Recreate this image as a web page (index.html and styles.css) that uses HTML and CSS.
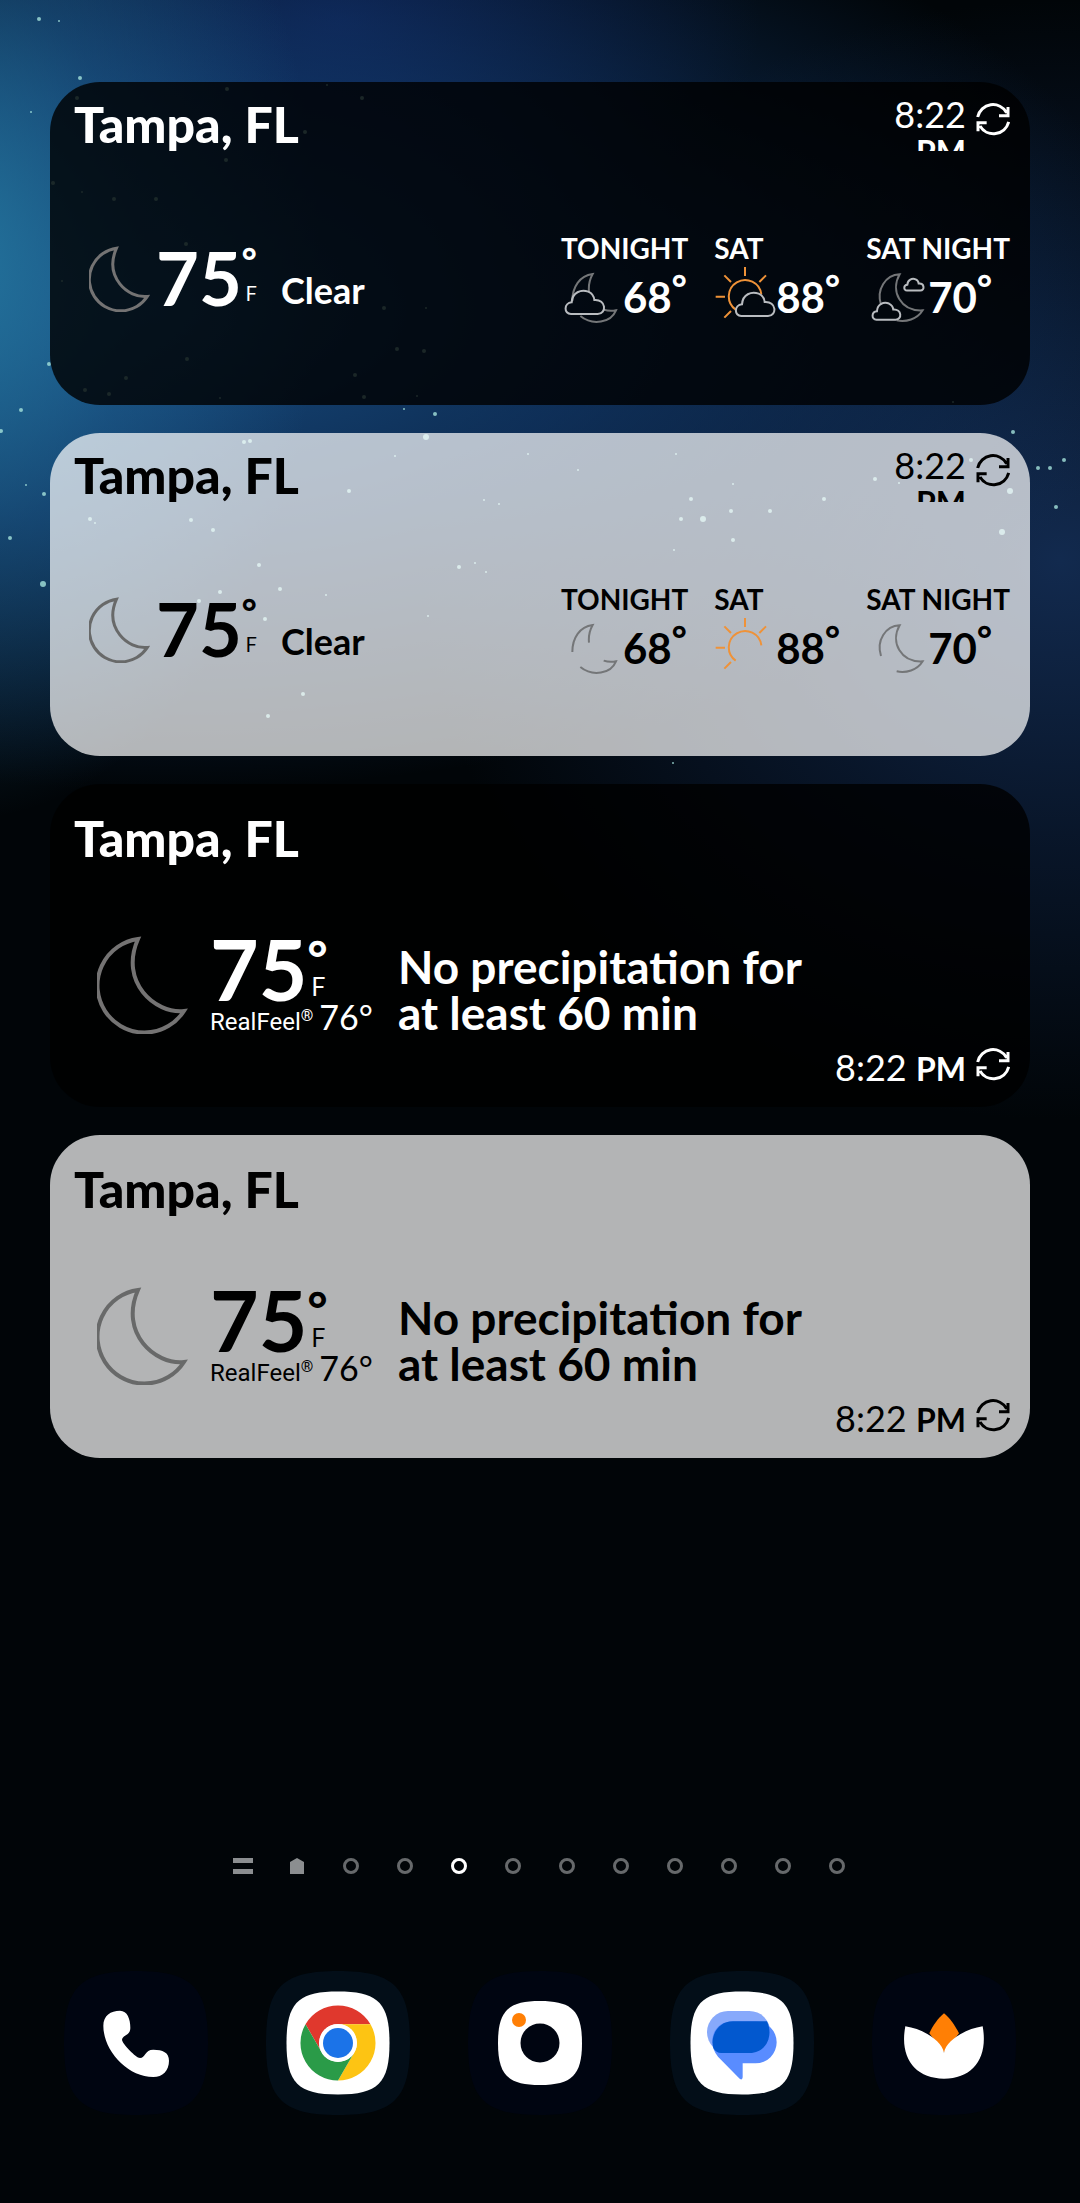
FILE: index.html
```html
<!DOCTYPE html>
<html lang="en">
<head>
    <meta charset="utf-8">
    <meta name="viewport" content="width=device-width, initial-scale=1">
    <title>Home screen</title>
    <link rel="stylesheet" href="styles.css">
</head>
<body>

    <!-- shared shapes -->
    <svg class="defs" aria-hidden="true">
        <symbol id="moon" viewBox="0 0 91 98">
            <path d="M41 3A47 47 0 1 0 87 75C58 78 22 46 41 3Z"/>
        </symbol>
        <symbol id="refresh" viewBox="1338 100 102 102">
            <path d="M1343 145A47 47 0 0 1 1430 132M1434 115V141H1407M1436 160A47 47 0 0 1 1350 172M1344 188V162H1370"/>
        </symbol>
        <symbol id="tonight-moon" viewBox="90 585 186 171">
            <path d="M124 690C124 648 146 614 185 609C176 625 172 642 174 662M148 735C185 765 240 755 255 718Q236 722 218 716"/>
        </symbol>
        <symbol id="sun" viewBox="541 585 186 171">
            <path d="M606 716A49 49 0 1 1 683 670M634 588V615M572 613L592 633M697 613L677 633M546 677H574M572 740L592 720"/>
        </symbol>
        <symbol id="satnight-moon" viewBox="996 585 186 171">
            <path d="M1041 702C1026 655 1055 612 1097 610C1068 660 1100 722 1166 718C1150 745 1115 754 1088 748"/>
        </symbol>
        <path id="cloud" d="M120 729C98 729 98 696 122 694C124 664 150 654 172 662C183 667 189 677 190 687C226 684 228 729 200 729Z"/>
        <path id="squircle" d="M72 0C128 0 144 16 144 72C144 128 128 144 72 144C16 144 0 128 0 72C0 16 16 0 72 0Z"/>
    </svg>

    <svg class="stars" id="stars" viewBox="0 0 1080 800" aria-hidden="true"></svg>

    <main class="home">
        <section class="widgets">

            <article class="card dark">
                <header class="card-head">
                    <h2>Tampa, FL</h2>
                    <div class="updated">
                        <time class="clipped">8:22 <b>PM</b></time>
                        <button class="refresh" aria-label="Refresh"><svg><use href="#refresh"/></svg></button>
                    </div>
                </header>
                <div class="card-body">
                    <div class="now">
                        <svg class="moon"><use href="#moon"/></svg>
                        <span class="temp">75</span>
                        <span class="unit"><i>°</i><small>F</small></span>
                        <span class="sky">Clear</span>
                    </div>
                    <ul class="forecast">
                        <li>
                            <h3>TONIGHT</h3>
                            <div class="day">
                                <svg viewBox="90 585 186 171"><use class="dim" href="#tonight-moon" x="90" y="585" width="186" height="171"/><use class="cloud" href="#cloud"/></svg>
                                <span>68</span><i>°</i>
                            </div>
                        </li>
                        <li>
                            <h3>SAT</h3>
                            <div class="day">
                                <svg viewBox="541 585 186 171"><use class="sun" href="#sun" x="541" y="585" width="186" height="171"/><use class="cloud" href="#cloud" transform="translate(503 6)"/></svg>
                                <span>88</span><i>°</i>
                            </div>
                        </li>
                        <li>
                            <h3>SAT NIGHT</h3>
                            <div class="day">
                                <svg viewBox="996 585 186 171"><use class="dim" href="#satnight-moon" x="996" y="585" width="186" height="171"/><use class="cloud" href="#cloud" transform="translate(941 221) scale(.72)"/><use class="cloud" href="#cloud" transform="translate(1059 294) scale(.5)"/></svg>
                                <span>70</span><i>°</i>
                            </div>
                        </li>
                    </ul>
                </div>
            </article>

            <article class="card light">
                <header class="card-head">
                    <h2>Tampa, FL</h2>
                    <div class="updated">
                        <time class="clipped">8:22 <b>PM</b></time>
                        <button class="refresh" aria-label="Refresh"><svg><use href="#refresh"/></svg></button>
                    </div>
                </header>
                <div class="card-body">
                    <div class="now">
                        <svg class="moon"><use href="#moon"/></svg>
                        <span class="temp">75</span>
                        <span class="unit"><i>°</i><small>F</small></span>
                        <span class="sky">Clear</span>
                    </div>
                    <ul class="forecast">
                        <li>
                            <h3>TONIGHT</h3>
                            <div class="day">
                                <svg><use class="dim" href="#tonight-moon"/></svg>
                                <span>68</span><i>°</i>
                            </div>
                        </li>
                        <li>
                            <h3>SAT</h3>
                            <div class="day">
                                <svg><use class="sun" href="#sun"/></svg>
                                <span>88</span><i>°</i>
                            </div>
                        </li>
                        <li>
                            <h3>SAT NIGHT</h3>
                            <div class="day">
                                <svg><use class="dim" href="#satnight-moon"/></svg>
                                <span>70</span><i>°</i>
                            </div>
                        </li>
                    </ul>
                </div>
            </article>

            <article class="card dark minute">
                <h2>Tampa, FL</h2>
                <div class="minute-body">
                    <svg class="moon"><use href="#moon"/></svg>
                    <div class="reading">
                        <div class="big">
                            <span class="temp">75</span>
                            <span class="unit"><i>°</i><small>F</small></span>
                        </div>
                        <div class="realfeel">RealFeel<sup>®</sup> <span>76°</span></div>
                    </div>
                    <p>No precipitation for<br>at least 60 min</p>
                </div>
                <footer class="updated">
                    <time>8:22 <b>PM</b></time>
                    <button class="refresh" aria-label="Refresh"><svg><use href="#refresh"/></svg></button>
                </footer>
            </article>

            <article class="card light minute">
                <h2>Tampa, FL</h2>
                <div class="minute-body">
                    <svg class="moon"><use href="#moon"/></svg>
                    <div class="reading">
                        <div class="big">
                            <span class="temp">75</span>
                            <span class="unit"><i>°</i><small>F</small></span>
                        </div>
                        <div class="realfeel">RealFeel<sup>®</sup> <span>76°</span></div>
                    </div>
                    <p>No precipitation for<br>at least 60 min</p>
                </div>
                <footer class="updated">
                    <time>8:22 <b>PM</b></time>
                    <button class="refresh" aria-label="Refresh"><svg><use href="#refresh"/></svg></button>
                </footer>
            </article>

        </section>

        <nav class="pager" aria-label="Pages">
            <button aria-label="Feed"><svg viewBox="0 0 20 20"><path d="M0 2H20V7H0ZM0 13H20V18H0Z"/></svg></button>
            <button aria-label="Home"><svg viewBox="0 0 20 20"><path d="M10 2L17 6V18H3V6Z"/></svg></button>
            <button class="dot" aria-label="Page 1"></button>
            <button class="dot" aria-label="Page 2"></button>
            <button class="dot active" aria-label="Page 3"></button>
            <button class="dot" aria-label="Page 4"></button>
            <button class="dot" aria-label="Page 5"></button>
            <button class="dot" aria-label="Page 6"></button>
            <button class="dot" aria-label="Page 7"></button>
            <button class="dot" aria-label="Page 8"></button>
            <button class="dot" aria-label="Page 9"></button>
            <button class="dot" aria-label="Page 10"></button>
        </nav>

        <nav class="dock" aria-label="Apps">
            <a href="#phone" aria-label="Phone">
                <svg viewBox="0 0 144 144">
                    <use href="#squircle" fill="#000511"/>
                    <svg viewBox="72 61 432 432"><path fill="#fff" d="M190 225C190 195 212 180 240 180C262 180 271 205 271 232C271 255 248 252 246 268C248 280 288 322 300 322C316 322 314 297 340 297C368 297 387 305 387 330C387 360 368 379 340 379C262 379 190 300 190 225Z"/></svg>
                </svg>
            </a>
            <a href="#chrome" aria-label="Chrome">
                <svg viewBox="0 0 144 144">
                    <use href="#squircle" fill="#030e18"/>
                    <path fill="#fff" d="M72 20.500C112 20.500 123.500 32 123.500 72C123.500 112 112 123.500 72 123.500C32 123.500 20.500 112 20.500 72C20.500 32 32 20.500 72 20.500Z"/>
                    <path fill="#e0382d" d="M39.500 53.250A37.500 37.500 0 0 1 104.500 53.250H72A18.750 18.750 0 0 0 55.800 81.400Z"/>
                    <path fill="#fdc413" d="M104.500 53.250A37.500 37.500 0 0 1 72 109.500L88.200 81.400A18.750 18.750 0 0 0 72 53.250Z"/>
                    <path fill="#2a9b48" d="M72 109.500A37.500 37.500 0 0 1 39.500 53.250L55.800 81.400A18.750 18.750 0 0 0 88.200 81.400Z"/>
                    <circle cx="72" cy="72" r="19" fill="#fff"/>
                    <circle cx="72" cy="72" r="15" fill="#1b73e8"/>
                </svg>
            </a>
            <a href="#camera" aria-label="Camera">
                <svg viewBox="0 0 144 144">
                    <use href="#squircle" fill="#000511"/>
                    <path fill="#fff" d="M72 30C104 30 114 40 114 72C114 104 104 114 72 114C40 114 30 104 30 72C30 40 40 30 72 30Z"/>
                    <circle cx="72" cy="72" r="19.500" fill="#000511"/>
                    <circle cx="51" cy="49" r="7" fill="#ff7f05"/>
                </svg>
            </a>
            <a href="#messages" aria-label="Messages">
                <svg viewBox="0 0 144 144">
                    <use href="#squircle" fill="#030e18"/>
                    <path fill="#fff" d="M72 20.500C112 20.500 123.500 32 123.500 72C123.500 112 112 123.500 72 123.500C32 123.500 20.500 112 20.500 72C20.500 32 32 20.500 72 20.500Z"/>
                    <svg viewBox="391 61 432 432">
                        <rect x="502" y="181" width="190" height="127" rx="63" fill="#87a9fb"/>
                        <path fill="#598cff" d="M580 212H648A63 63 0 0 1 648 338H609V380Q608 390 600 384L535 318C500 275 520 212 580 212Z"/>
                        <path fill="#0258cf" d="M580 212H682C702 255 680 307 630 307H545C534 307 527 302 521 292C511 255 535 212 580 212Z"/>
                    </svg>
                </svg>
            </a>
            <a href="#gallery" aria-label="Gallery">
                <svg viewBox="0 0 144 144">
                    <use href="#squircle" fill="#000511"/>
                    <svg viewBox="996 61 432 432">
                        <path fill="#ff7f05" d="M1212 188C1228 200 1245 225 1257 248L1212 306L1168 248C1178 225 1195 202 1212 188Z"/>
                        <path fill="#fff" d="M1096 227C1150 235 1205 270 1212 306C1218 270 1275 235 1328 227C1345 320 1300 384 1212 384C1124 384 1078 320 1096 227Z"/>
                    </svg>
                </svg>
            </a>
        </nav>
    </main>

    <script type="text/javascript">
        // x, y, radius
        const stars = [
            [39,19,2],[59,21,1],[80,78,2],[31,112,1],[227,89,2],[327,85,1],[362,98,2],[305,132,2],[77,98,2],
            [226,160,2],[53,183,2],[82,192,1],[114,199,2],[156,199,2],[186,244,2],[49,364,2],[126,378,2],
            [109,394,2],[85,390,2],[220,398,1],[187,359,2],[355,375,2],[364,397,2],[417,396,1],[397,349,2],
            [424,351,2],[384,308,2],[426,308,1],[62,281,1],[21,410,2],[404,409,1],[435,414,2],[426,437,3],
            [244,442,2],[250,441,2],[395,456,1],[349,491,2],[528,454,1],[578,470,1],[484,500,1],[499,504,1],
            [90,519,2],[95,523,1],[191,520,2],[213,530,2],[44,494,2],[26,485,1],[10,538,2],[43,584,3],
            [259,565,2],[459,567,2],[475,563,1],[486,572,1],[428,616,1],[280,589,2],[220,592,2],[199,601,2],
            [326,595,1],[265,619,2],[303,694,2],[268,716,2],[953,402,1],[1013,432,2],[1064,460,2],[1050,468,2],
            [1038,468,2],[1056,507,2],[1002,532,3],[1010,491,3],[875,479,2],[824,499,2],[770,511,2],[733,484,1],
            [691,499,2],[731,511,2],[681,519,2],[703,519,3],[733,540,2],[674,550,1],[899,483,1],[971,460,2],
            [676,454,1],[673,763,1],[1,431,2]
        ];
        const sky = document.getElementById('stars');
        stars.forEach(([x, y, r]) => {
            const star = document.createElementNS('http://www.w3.org/2000/svg', 'circle');
            star.setAttribute('cx', x);
            star.setAttribute('cy', y);
            star.setAttribute('r', r);
            sky.appendChild(star);
        });
    </script>

</body>
</html>
```
FILE: styles.css
```css
*,
*::before {
    margin: 0;
    padding: 0;
    box-sizing: border-box;
}

body {
    position: relative;
    color: #fff;
    font-family: Lato, "Liberation Sans", sans-serif;
    background:
        radial-gradient(ellipse 360px 560px at -40px 260px, rgba(38, 125, 165, 0.85), rgba(34, 110, 160, 0.4) 50%, rgba(30, 100, 160, 0) 100%),
        radial-gradient(ellipse 1000px 480px at 160px 310px, rgba(26, 84, 140, 0.9), rgba(20, 66, 124, 0.65) 45%, rgba(14, 40, 90, 0) 100%),
        radial-gradient(ellipse 420px 260px at 340px 20px, rgba(16, 34, 100, 0.6), rgba(10, 20, 70, 0) 100%),
        radial-gradient(ellipse 640px 560px at 1060px 560px, rgba(20, 46, 86, 0.9), rgba(16, 38, 74, 0.5) 50%, rgba(10, 30, 60, 0) 100%),
        #010508;
    background-repeat: no-repeat;
}

button {
    border: none;
    background: none;
    color: inherit;
    cursor: pointer;
}

svg {
    display: block;
    flex: none;
}

i {
    font-style: normal;
}

.defs {
    position: absolute;
    width: 0;
    height: 0;
}

.defs path {
    vector-effect: non-scaling-stroke;
}

.stars {
    position: absolute;
    top: 0;
    left: 0;
    width: 100%;
    fill: #a5e3dc;
    opacity: 0.8;
}

.home {
    position: relative;
    display: flex;
    flex-direction: column;
    min-height: 100vh;
    padding: 82px 50px 88px;
}

.widgets {
    display: flex;
    flex-direction: column;
    gap: 28px;
}

/* weather cards */
.card {
    display: flex;
    flex-direction: column;
    min-height: 323px;
    padding: 12px 20px 16px 24px;
    border-radius: 50px;
}

.dark {
    background: rgba(0, 0, 0, 0.8);
    color: #fff;
}

.light {
    background: rgba(255, 255, 255, 0.7);
    color: #000;
}

h2 {
    font-size: 50px;
    line-height: 60px;
    font-weight: 900;
}

.card-head {
    display: flex;
    justify-content: space-between;
}

.updated {
    display: flex;
    gap: 10px;
}

.updated time {
    font-size: 36px;
    line-height: 36px;
    text-align: right;
}

.updated .clipped {
    width: 78px;
    height: 55px;
    margin-top: 2px;
    overflow: hidden;
}

.updated b {
    font-size: 32px;
}

.refresh {
    width: 34px;
    height: 34px;
    margin-top: 8px;
}

.refresh svg {
    width: 34px;
    height: 34px;
    fill: none;
    stroke: currentColor;
    stroke-width: 3px;
}

.card-body {
    display: flex;
    justify-content: space-between;
    padding-top: 76px;
}

.now {
    display: flex;
    align-items: flex-start;
    padding: 16px 0 0 15px;
}

.moon {
    width: 61px;
    height: 66px;
    fill: none;
    stroke: #747373;
    stroke-width: 3px;
}

.light .moon {
    stroke: #686969;
}

.now .temp {
    margin-left: 6px;
    font-size: 74px;
    line-height: 64px;
    font-weight: 700;
}

.unit {
    display: flex;
    flex-direction: column;
}

.unit i {
    font-size: 36px;
    line-height: 28px;
    font-weight: 900;
}

.unit small {
    margin: 10px 0 0 4px;
    font-family: Roboto, sans-serif;
    font-size: 20px;
    line-height: 20px;
}

.now .sky {
    margin-left: 24px;
    padding-top: 20px;
    font-size: 36px;
    line-height: 48px;
    font-weight: 700;
}

.forecast {
    display: flex;
    gap: 26px;
    list-style: none;
}

.forecast li {
    min-width: 126px;
}

h3 {
    font-size: 28px;
    line-height: 36px;
    font-weight: 700;
    white-space: nowrap;
}

.day {
    display: flex;
    align-items: flex-start;
}

.day svg {
    width: 62px;
    height: 57px;
    fill: none;
    stroke-width: 2px;
}

.day span {
    font-size: 42px;
    line-height: 62px;
    font-weight: 700;
}

.day i {
    font-size: 36px;
    line-height: 42px;
    font-weight: 900;
}

.dim {
    stroke: #747678;
}

.sun {
    stroke: #ef9238;
}

.cloud {
    stroke: #b9bcc0;
}

/* minute by minute cards */
.minute {
    padding-top: 24px;
    padding-bottom: 20px;
}

.minute-body {
    display: flex;
    align-items: flex-start;
    padding: 64px 0 0 23px;
}

.minute .moon {
    width: 91px;
    height: 98px;
    margin-top: 4px;
    stroke-width: 4px;
}

.reading {
    flex: none;
    width: 210px;
    padding-left: 22px;
}

.big {
    display: flex;
    height: 73px;
}

.big .temp {
    font-size: 84px;
    line-height: 73px;
    font-weight: 700;
}

.big .unit i {
    padding-top: 4px;
    font-size: 48px;
    line-height: 44px;
}

.big .unit small {
    margin-top: 0;
    font-size: 25px;
    line-height: 16px;
}

.realfeel {
    font-family: Roboto, sans-serif;
    font-size: 24px;
    line-height: 24px;
    white-space: nowrap;
}

.realfeel sup {
    font-size: 16px;
    line-height: 0;
}

.realfeel span {
    font-family: Lato, "Liberation Sans", sans-serif;
    font-size: 34px;
}

.minute p {
    padding-top: 12px;
    font-size: 46px;
    line-height: 46px;
    font-weight: 700;
}

.minute .updated {
    justify-content: flex-end;
    align-items: flex-end;
    margin-top: auto;
}

.minute .refresh {
    margin: 0 0 6px;
}

/* page indicator */
.pager {
    display: flex;
    justify-content: space-between;
    width: 614px;
    max-width: 100%;
    margin: auto auto 95px;
}

.pager button {
    width: 20px;
    height: 20px;
}

.pager svg {
    width: 20px;
    height: 20px;
    fill: #8b8e90;
}

.pager .dot::before {
    content: "";
    display: block;
    width: 16px;
    height: 16px;
    margin: auto;
    border: 3px solid #66696b;
    border-radius: 50%;
}

.pager .active::before {
    border-color: #fff;
}

.dock {
    display: flex;
    justify-content: space-between;
    padding: 0 14px;
}

.dock > a > svg {
    width: 144px;
    height: 144px;
}
```
